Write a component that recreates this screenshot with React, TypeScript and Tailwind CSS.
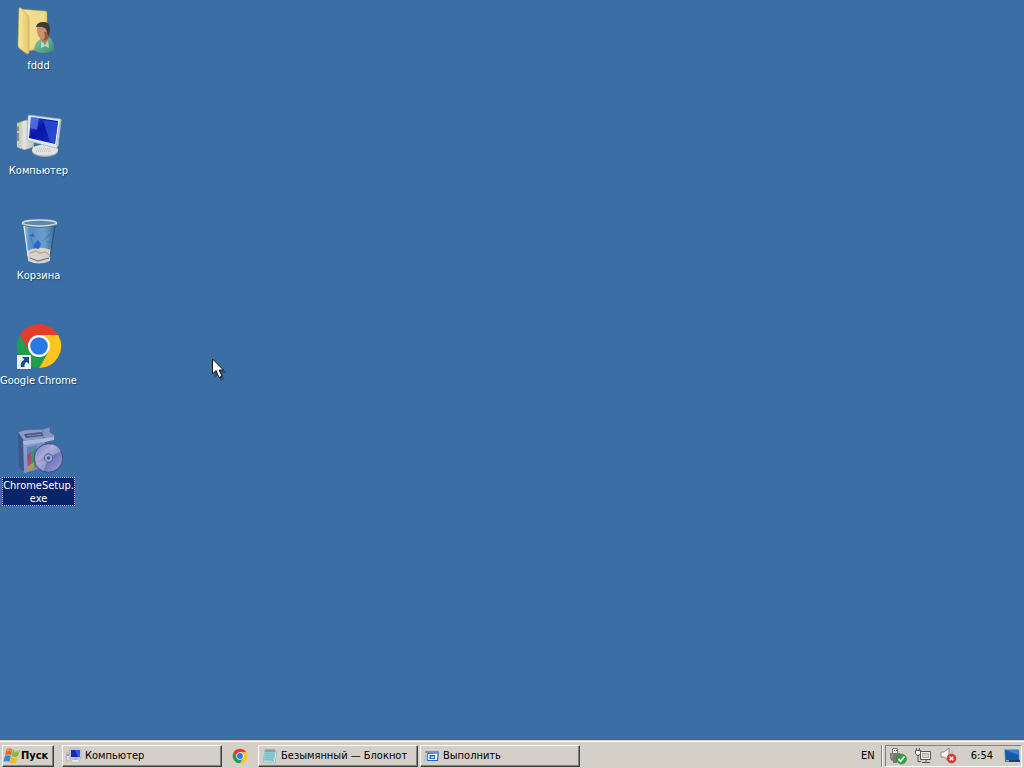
import type { ReactNode } from 'react';

function FolderUserIcon() {
  return (
    <svg viewBox="0 0 48 48" className="size-12" aria-hidden="true">
      <defs>
        <linearGradient id="fold" x1="0" y1="0" x2="1" y2="1">
          <stop offset="0" stopColor="#f3e6a0" />
          <stop offset="1" stopColor="#e3c55f" />
        </linearGradient>
        <linearGradient id="foldFront" x1="0" y1="0" x2="1" y2="0">
          <stop offset="0" stopColor="#f8eb9c" />
          <stop offset="1" stopColor="#e3c76a" />
        </linearGradient>
        <linearGradient id="shirt" x1="0" y1="0" x2="1" y2="1">
          <stop offset="0" stopColor="#8cc9a4" />
          <stop offset="1" stopColor="#3d8a72" />
        </linearGradient>
      </defs>
      <path d="M5 2 30 4q2 0 2 2v34l-18 4z" fill="url(#fold)" stroke="#b79a45" strokeWidth=".5" />
      <path d="M13 11 29 6v32l-15 5z" fill="#f0dc8c" />
      <path d="M4 2q0-2 2-1l7 8q1 1 1 3v34l-2 1-8-6q-1-1-1-3z" fill="url(#foldFront)" stroke="#c3a54b" strokeWidth=".6" />
      <path d="M19 43q1-9 7-11l8-2q5 3 5 13-4 3-10 3-7 0-10-3z" fill="url(#shirt)" />
      <path d="m25 32 7 6 2-8-2-3h-6z" fill="#b87d58" />
      <path d="M22 20q5-4 11-1 2 6-1 12-3 3-6 1-5-4-4-12z" fill="#c8916b" />
      <path d="M29 25q4 0 4-3l1 8q-2 4-6 3 3-3 1-8z" fill="#8f5e40" />
      <path d="M21 20q1-5 7-5 7-1 7 7 0 5-2 7-1-6-3-8-4-2-9-1z" fill="#3f3c36" />
      <path d="m26 34 4 4 3-5 1 8-4-2-4 2z" fill="#c4ead0" opacity=".8" />
    </svg>
  );
}

function ComputerIcon() {
  return (
    <svg viewBox="0 0 48 48" className="size-12" aria-hidden="true">
      <defs>
        <linearGradient id="screen" x1="0" y1="0" x2="1" y2="1">
          <stop offset="0" stopColor="#3555dc" />
          <stop offset=".4" stopColor="#0a14a8" />
          <stop offset="1" stopColor="#1430c8" />
        </linearGradient>
        <linearGradient id="tower" x1="0" y1="0" x2="1" y2="0">
          <stop offset="0" stopColor="#a9aaa4" />
          <stop offset=".4" stopColor="#e4e6e0" />
          <stop offset="1" stopColor="#b8beb9" />
        </linearGradient>
      </defs>
      <path d="m2 11 9-3 8 2v25l-10 3-7-4z" fill="url(#tower)" stroke="#878b84" strokeWidth=".5" />
      <path d="m2 11 4 1v25l-4-2z" fill="#c9cdc5" />
      <path d="M3 14v5m0 2v8" stroke="#414b3e" />
      <path d="M4 12v3" stroke="#b4df49" strokeWidth="1.5" />
      <path d="m26 29 9 2 2 7-10 1z" fill="#cbd0d0" />
      <ellipse cx="30" cy="39" rx="13" ry="6" fill="#a7adac" />
      <ellipse cx="30" cy="38" rx="13" ry="5.5" fill="#dfe4e1" />
      <path d="M22 37h14m-15 2h15" stroke="#b3b8b5" strokeDasharray="1 1" />
      <path d="M14 3 45 7q2 0 1 2l-3 25q-1 2-2 2l-27-7q-2-1-2-2l1-22q0-2 1-2z" fill="#dcebed" stroke="#9eabb2" strokeWidth=".7" />
      <path d="m16 5 27 4-3 23-26-6z" fill="url(#screen)" />
      <path d="m16 5 8 1-2 12-7-2z" fill="#6387ee" opacity=".65" />
      <path d="m28 8 15 2-3 21-5-1z" fill="#2b50d6" opacity=".8" />
      <path d="m42 34 4-26-1-1-4 27z" fill="#acb8c2" />
    </svg>
  );
}

function RecycleBinIcon() {
  return (
    <svg viewBox="0 0 48 48" className="size-12" aria-hidden="true">
      <defs>
        <linearGradient id="bin" x1="0" y1="0" x2="1" y2="0">
          <stop offset="0" stopColor="#b9d2e6" />
          <stop offset=".2" stopColor="#5a92c8" />
          <stop offset=".65" stopColor="#6fa3d2" />
          <stop offset="1" stopColor="#31648f" />
        </linearGradient>
      </defs>
      <path d="m8 6 5 37q11 6 22 0l6-37z" fill="url(#bin)" opacity=".9" />
      <path d="M12 34q11-6 24-1l-1 8q-10 5-22 0z" fill="#d9d2ca" />
      <path d="m13 40 9 3 13-3v4q-11 5-22 0z" fill="#c9d3d8" />
      <path d="m15 41 8 3 11-3" fill="none" stroke="#6f6a66" strokeWidth="1" />
      <path d="m15 36 6-2 4 2 5-1 4 3" fill="none" stroke="#b9ab9c" strokeWidth="1.5" />
      <path d="m19 27 4-4 3 4-2 5-5-1zm-5-8 4-3 2 4z" fill="#255ec0" opacity=".85" />
      <path d="m28 24 8-8m-20 4 3 12m12-8 5 2" fill="none" stroke="#376fae" opacity=".7" />
      <path d="m9 9 4 30" stroke="#e4edf0" strokeWidth="1" />
      <path d="m40 9-5 31" stroke="#274e78" strokeWidth="1" />
      <ellipse cx="24.5" cy="6" rx="17" ry="3" fill="#5a8ab4" stroke="#d4dbdc" strokeWidth="1.6" />
      <path d="M8 8q16 5 33 0" fill="none" stroke="#566b78" strokeWidth=".8" />
    </svg>
  );
}

function ChromeIcon({ className = 'size-12' }: { className?: string }) {
  return (
    <svg viewBox="0 0 48 48" className={className} aria-hidden="true">
      <path d="M4.9 13A22 22 0 0 1 43.1 13H24L14.5 29.5z" fill="#e33b2e" />
      <path d="M43.1 13A22 22 0 0 1 24 46L33.5 29.5 24 13z" fill="#fcc61f" />
      <path d="M24 46A22 22 0 0 1 4.9 13L14.5 29.5H33.5z" fill="#239c4b" />
      <circle cx="24" cy="24" r="11" fill="#fff" />
      <circle cx="24" cy="24" r="8.8" fill="#2878e6" />
    </svg>
  );
}

function ShortcutIcon() {
  return (
    <svg viewBox="0 0 14 14" className="absolute bottom-px left-0.5 size-3.5" aria-hidden="true">
      <path d="M0 0h14v14H0z" fill="#e8f0f5" />
      <path d="M5 2h7v7L9.7 6.8Q7 8.5 7.5 12H4Q2.500 8 7.300 4.400z" fill="#164c8b" />
    </svg>
  );
}

function SetupIcon() {
  return (
    <svg viewBox="0 0 48 48" className="size-12" aria-hidden="true">
      <defs>
        <linearGradient id="box" x1="0" y1="0" x2="1" y2="1">
          <stop offset="0" stopColor="#93a8d2" />
          <stop offset="1" stopColor="#5f80b8" />
        </linearGradient>
        <linearGradient id="disc" x1="0" y1="0" x2="1" y2="1">
          <stop offset="0" stopColor="#6a7cc0" />
          <stop offset=".35" stopColor="#aca9d9" />
          <stop offset=".55" stopColor="#6a74b8" />
          <stop offset="1" stopColor="#a3a6d8" />
        </linearGradient>
      </defs>
      <path d="m8 13 22-3v30l-20 6-2-1z" fill="url(#box)" />
      <path d="m3 5 5 8 1 32-5-5z" fill="#3f5688" />
      <path d="m3 5 7-2 24-1-3 9-22 3z" fill="#8a9cc4" stroke="#4b608f" strokeWidth=".5" />
      <path d="m9 7 18-2 1 4-17 2z" fill="#4c5584" />
      <path d="m12 8 14-1v1L12 9z" fill="#7f8db8" />
      <path d="m28 2 7-2v5l5 4-1 3-11-1z" fill="#8296c4" stroke="#4b608f" strokeWidth=".5" />
      <path d="m8 14 22-3 9-1v3l-9 2-21 3z" fill="#a9b8da" />
      <path d="m12 20 10-2v7l-10 3z" fill="#5f80bf" />
      <path d="m12 28 4-3 2 13-5 3z" fill="#a35068" />
      <path d="m16 25 4-4 5 10-3 9-6 1z" fill="#3a9668" />
      <path d="m12 40 7-5v7l-7 3z" fill="#b0955a" />
      <circle cx="33.5" cy="31" r="14.300" fill="url(#disc)" stroke="#3e4a84" strokeWidth="1" />
      <path d="M33.500 31 36 17q7 1 10 7zM33.500 31l-5 13q-5-2-8-7z" fill="#c2bfe4" opacity=".5" />
      <circle cx="33.5" cy="31" r="4.200" fill="#9aa8d0" stroke="#4c5c9a" />
      <circle cx="33.5" cy="31" r="1.700" fill="#385d97" />
    </svg>
  );
}

function WindowsIcon() {
  return (
    <svg viewBox="0 0 18 16" className="h-4 w-[18px] shrink-0" aria-hidden="true">
      <path d="M3.500 1.500q3-2 6 0L8 7.500q-3-2-6 0z" fill="#e36631" />
      <path d="M10 2q3 2 7 0l-2 6q-3 2-6.500 0z" fill="#84b93b" />
      <path d="M1.800 8.300q3-2 6 0L6.300 14q-3-2-6 0z" fill="#378bce" />
      <path d="M8.300 8.700q3 2 6.500 0L13 14.500q-3 2-6.300 0z" fill="#f2b927" />
      <path d="M4 3q3-2 4.500 0m2.500.500q3 1 5 0" fill="none" stroke="#f6c9a0" strokeWidth=".7" />
    </svg>
  );
}

function TaskComputerIcon() {
  return (
    <svg viewBox="0 0 16 16" className="size-4 shrink-0" aria-hidden="true">
      <path d="M.500 5H4v8H.500z" fill="#ddd" stroke="#999" strokeWidth=".5" />
      <path d="M2 6v2" stroke="#576349" />
      <path d="M4 1h11v9H4z" fill="#cbd5e0" stroke="#8d9cac" strokeWidth=".5" />
      <path d="M5 2h9v7H5z" fill="#1428b8" />
      <path d="m9 2 3 7h2V2z" fill="#315ad8" />
      <path d="M8 10h3v2H8z" fill="#aaa" />
      <ellipse cx="9.5" cy="13" rx="4.5" ry="1.5" fill="#e9eaed" stroke="#a4a6aa" strokeWidth=".5" />
    </svg>
  );
}

function NotepadIcon() {
  return (
    <svg viewBox="0 0 16 16" className="size-4 shrink-0" aria-hidden="true">
      <path d="m3 2 12 1-2 12-12-1z" fill="#f3f7f5" stroke="#849798" strokeWidth=".6" />
      <path d="m3 2 11 1-2 11-11-1z" fill="#8bcbd1" />
      <path d="m4 5 8 1M4 7l8 1M3 9l8 1m-8 1 8 1" stroke="#6bb9c5" strokeWidth=".6" />
      <path d="M4 1v3m2-3v3m2-3v3m2-3v3m2-3v3" stroke="#58696b" strokeWidth=".7" />
    </svg>
  );
}

function RunIcon() {
  return (
    <svg viewBox="0 0 16 16" className="size-4 shrink-0" aria-hidden="true">
      <path d="M3 3h12l-1 10H3z" fill="#2d64bd" />
      <path d="M1 3h14v2H1z" fill="#6794d9" />
      <path d="m4 6 9.500-.500L13 12H4z" fill="#eef5ff" />
      <path d="M5.500 7H11v4H5.500z" fill="#2b67bd" />
      <path d="M7 8.500h3V10H7z" fill="#dcebff" />
      <path d="M0 8h4m-3 2h3m-4 2h4" stroke="#7ea5dc" strokeWidth=".8" />
    </svg>
  );
}

function UsbIcon() {
  return (
    <svg viewBox="0 0 17 18" className="h-[18px] w-[17px]" aria-hidden="true">
      <path d="M2.500 1.500h5v5h-5z" fill="#e1e1dc" stroke="#80807c" />
      <path d="M4 3.500h1m1 0h1" stroke="#555" />
      <path d="M0 6h10v4q0 3-3 4v2H3v-2q-3-1-3-4z" fill="#767875" />
      <path d="M2 7v4" stroke="#aaa" />
      <circle cx="11.5" cy="12" r="5" fill="#32a33c" stroke="#217b2c" strokeWidth=".5" />
      <path d="m8.500 12 2 2.300 4-4.800" fill="none" stroke="#fff" strokeWidth="1.700" />
    </svg>
  );
}

function NetworkIcon() {
  return (
    <svg viewBox="0 0 17 16" className="h-4 w-[17px]" aria-hidden="true">
      <path d="M5.500 3.500h10v8h-10z" fill="#eee" stroke="#555" />
      <path d="M7.500 5.500h6v4h-6z" fill="#d0d0ca" stroke="#888" strokeWidth=".6" />
      <path d="M7 14.500h8m-4-3v3" stroke="#555" />
      <path d="M.500 2.500h5v3l-1.500 2H2L.500 5.500zM1.500 0v2m3-2v2" fill="#f5f5f5" stroke="#555" />
      <path d="M3 8v5.500h3" fill="none" stroke="#555" />
    </svg>
  );
}

function MutedIcon() {
  return (
    <svg viewBox="0 0 17 17" className="size-[17px]" aria-hidden="true">
      <path d="M1 5h3l5-4v13l-5-4H1z" fill="#f4f4f1" stroke="#777" strokeWidth=".8" />
      <path d="M11.500 3q1 1 1 3" fill="none" stroke="#aaa" strokeWidth=".8" />
      <circle cx="11.5" cy="11.5" r="4.5" fill="#d53b36" stroke="#a62b29" strokeWidth=".5" />
      <path d="m9.700 9.700 3.600 3.600m0-3.600-3.600 3.600" stroke="#fff" strokeWidth="1.400" />
    </svg>
  );
}

function ShowDesktopIcon() {
  return (
    <svg viewBox="0 0 16 14" className="h-3.5 w-4" aria-hidden="true">
      <path d="M0 0h15l1 13H1z" fill="#81a7d0" />
      <path d="M1 1h13.500l.500 10H1.500z" fill="#155ba7" />
      <path d="m1 1 13.700 5-.200-5z" fill="#3982cb" />
      <path d="M1 11h15v2H1z" fill="#26415d" />
      <path d="M1.500 11H5v1.500H1.500z" fill="#8abc78" />
    </svg>
  );
}

interface DesktopItemProps {
  label: ReactNode;
  icon: ReactNode;
  selected?: boolean;
}

function DesktopItem({ label, icon, selected = false }: DesktopItemProps) {
  return (
    <li className="min-h-[105px]">
      <button type="button" className="flex w-full flex-col items-center gap-0.5">
        <span className="relative block">{icon}</span>
        <span
          className={
            selected
              ? 'w-[73px] border border-dotted border-[#d9c99a] bg-[#0a246a] pt-px text-center leading-[13px] text-white'
              : 'whitespace-nowrap border border-transparent pt-px leading-[13px] text-white [text-shadow:1px_1px_1px_#23456d]'
          }
        >
          {label}
        </span>
      </button>
    </li>
  );
}

const raised =
  'border border-t-white border-l-white border-r-[#404040] border-b-[#404040] shadow-[inset_-1px_-1px_0_#808080]';

function TaskButton({ label, icon }: { label: string; icon: ReactNode }) {
  return (
    <button type="button" className={`flex h-[22px] w-40 min-w-0 items-center gap-[3px] px-[3px] ${raised}`}>
      {icon}
      <span className="truncate pt-px">{label}</span>
    </button>
  );
}

export default function App() {
  return (
    <div className="relative flex min-h-screen cursor-default flex-col bg-[#3b6ea5] font-['DejaVu_Sans_Condensed','DejaVu_Sans',sans-serif] text-[11px] text-black">
      <main className="flex-1 pt-[7px]">
        <ul className="flex w-[77px] flex-col">
          <DesktopItem label="fddd" icon={<FolderUserIcon />} />
          <DesktopItem label="Компьютер" icon={<ComputerIcon />} />
          <DesktopItem label="Корзина" icon={<RecycleBinIcon />} />
          <DesktopItem
            label="Google Chrome"
            icon={
              <>
                <ChromeIcon />
                <ShortcutIcon />
              </>
            }
          />
          <DesktopItem label={<>ChromeSetup.<br />exe</>} icon={<SetupIcon />} selected />
        </ul>
      </main>
      <footer className="flex h-7 items-center border-t border-[#d4d0c8] bg-[#d4d0c8] px-0.5 pt-0.5 shadow-[inset_0_1px_0_#fff]">
        <button type="button" className={`flex h-[22px] w-[52px] items-center font-bold ${raised}`}>
          <WindowsIcon />
          <span className="pt-px">Пуск</span>
        </button>
        <nav className="ml-2 flex min-w-0 flex-1 items-center" aria-label="Панель задач">
          <TaskButton label="Компьютер" icon={<TaskComputerIcon />} />
          <button type="button" className="flex w-9 justify-center" aria-label="Google Chrome">
            <ChromeIcon className="size-4" />
          </button>
          <div className="flex min-w-0 gap-0.5">
            <TaskButton label="Безымянный — Блокнот" icon={<NotepadIcon />} />
            <TaskButton label="Выполнить" icon={<RunIcon />} />
          </div>
        </nav>
        <button type="button" className="px-1.5 pt-px" aria-label="Язык: EN">EN</button>
        <div className="mr-0.5 h-[22px] w-0.5 border-r border-l border-r-white border-l-[#808080]" />
        <div className="flex h-[22px] items-center border border-t-[#808080] border-l-[#808080] border-r-white border-b-white pr-px pl-1">
          <div className="flex items-center gap-2">
            <UsbIcon />
            <NetworkIcon />
            <MutedIcon />
          </div>
          <time className="ml-3.5 pt-px">6:54</time>
          <button type="button" className="ml-[11px]" aria-label="Свернуть все окна">
            <ShowDesktopIcon />
          </button>
        </div>
      </footer>
      <svg viewBox="0 0 16 24" className="pointer-events-none absolute top-[358px] left-[212px] h-6 w-4" aria-hidden="true">
        <path d="M2 3v17l4-3 3 6 3-2-2-6h5z" fill="#204164" opacity=".6" />
        <path d="M.500 1v15l3.500-3.500 3 7 3-1.500-3-6h4.500z" fill="#fff" stroke="#111" />
      </svg>
    </div>
  );
}
